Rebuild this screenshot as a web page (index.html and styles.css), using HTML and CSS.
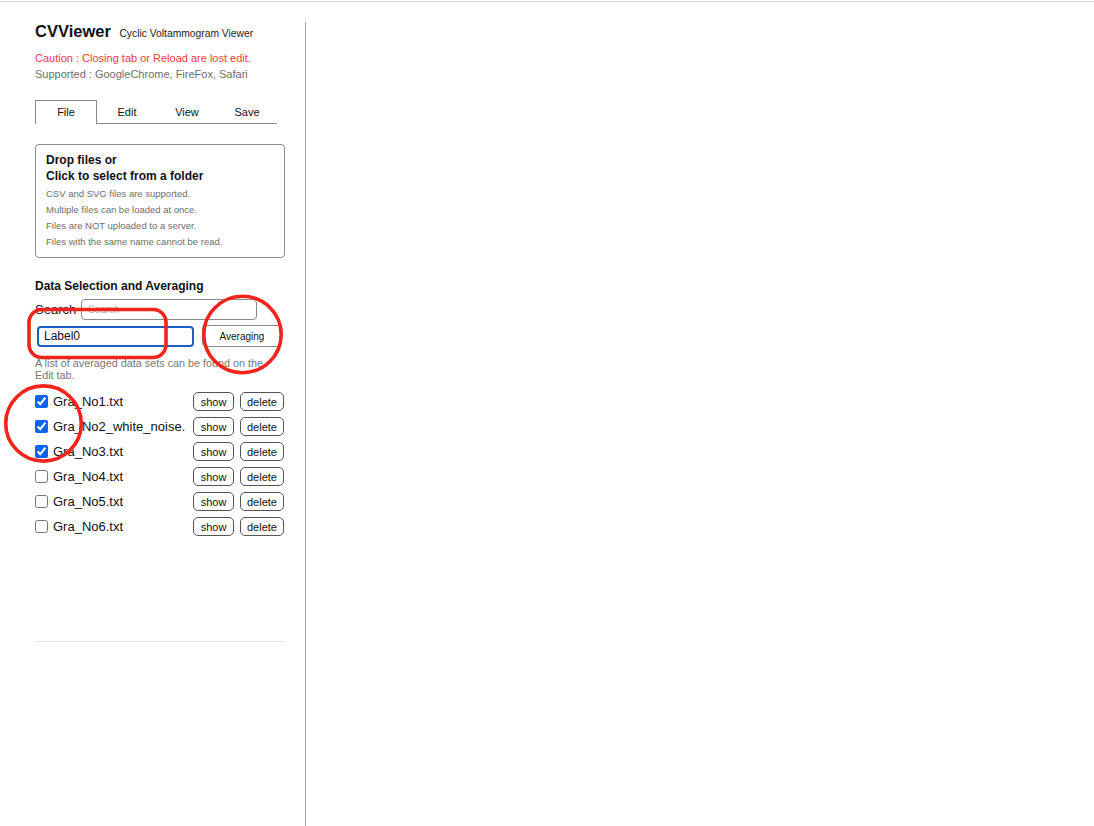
FILE: index.html
```html
<!DOCTYPE html>
<html lang="en">
<head>
<meta charset="utf-8">
<title>CVViewer</title>
<link rel="stylesheet" href="styles.css">
</head>
<body>
<div class="topline"></div>
<div class="app">
  <aside class="sidebar">
    <h1 class="title">CVViewer <span class="subtitle">Cyclic Voltammogram Viewer</span></h1>
    <p class="caution">Caution : Closing tab or Reload are lost edit.</p>
    <p class="supported">Supported : GoogleChrome, FireFox, Safari</p>

    <nav class="tabs">
      <div class="tab active">File</div>
      <div class="tab">Edit</div>
      <div class="tab">View</div>
      <div class="tab">Save</div>
      <div class="tab-rest"></div>
    </nav>

    <div class="dropbox">
      <div class="drop-title">Drop files or<br>Click to select from a folder</div>
      <div class="drop-note">CSV and SVG files are supported.</div>
      <div class="drop-note">Multiple files can be loaded at once.</div>
      <div class="drop-note">Files are NOT uploaded to a server.</div>
      <div class="drop-note">Files with the same name cannot be read.</div>
    </div>

    <h2 class="section-title">Data Selection and Averaging</h2>
    <div class="search-row">
      <label class="search-label">Search</label>
      <input class="search-input" type="text" placeholder="Search">
    </div>
    <div class="avg-row">
      <input class="label-input" type="text" value="Label0">
      <button class="avg-btn">Averaging</button>
    </div>
    <p class="avg-note">A list of averaged data sets can be found on the Edit tab.</p>

    <div class="file-list">
      <div class="file-row">
        <input type="checkbox" class="chk" checked>
        <span class="fname">Gra_No1.txt</span>
        <button class="small-btn show">show</button>
        <button class="small-btn del">delete</button>
      </div>
      <div class="file-row">
        <input type="checkbox" class="chk" checked>
        <span class="fname">Gra_No2_white_noise.</span>
        <button class="small-btn show">show</button>
        <button class="small-btn del">delete</button>
      </div>
      <div class="file-row">
        <input type="checkbox" class="chk" checked>
        <span class="fname">Gra_No3.txt</span>
        <button class="small-btn show">show</button>
        <button class="small-btn del">delete</button>
      </div>
      <div class="file-row">
        <input type="checkbox" class="chk">
        <span class="fname">Gra_No4.txt</span>
        <button class="small-btn show">show</button>
        <button class="small-btn del">delete</button>
      </div>
      <div class="file-row">
        <input type="checkbox" class="chk">
        <span class="fname">Gra_No5.txt</span>
        <button class="small-btn show">show</button>
        <button class="small-btn del">delete</button>
      </div>
      <div class="file-row">
        <input type="checkbox" class="chk">
        <span class="fname">Gra_No6.txt</span>
        <button class="small-btn show">show</button>
        <button class="small-btn del">delete</button>
      </div>
    </div>
  </aside>
  <main class="canvas"></main>
</div>

<svg class="annotations" width="1094" height="826" viewBox="0 0 1094 826" xmlns="http://www.w3.org/2000/svg">
  <rect x="29" y="309.5" width="137" height="48" rx="13" ry="13" fill="none" stroke="#f2231b" stroke-width="3.6"/>
  <ellipse cx="242.5" cy="334.5" rx="38.7" ry="38.2" fill="none" stroke="#f2231b" stroke-width="3.6"/>
  <ellipse cx="43.5" cy="423.5" rx="37.8" ry="37.6" fill="none" stroke="#f2231b" stroke-width="3.6"/>
</svg>
</body>
</html>
```

FILE: styles.css
```css
* { box-sizing: border-box; }

html, body {
  margin: 0;
  padding: 0;
  background: #ffffff;
}

body {
  font-family: "Liberation Sans", Arial, Helvetica, sans-serif;
  color: #111;
  position: relative;
  overflow: hidden;
  height: 826px;
}

.topline {
  margin-top: 1px;
  border-top: 1px solid #d9d9d9;
}

.app {
  display: flex;
  align-items: stretch;
}

.sidebar {
  margin-top: 20px;
  width: 306px;
  padding: 0 20px 0 35px;
  border-right: 1px solid #a6a6a6;
  min-height: 820px;
}

.canvas { flex: 1; }

.title {
  margin: 0;
  font-size: 16.5px;
  font-weight: bold;
  line-height: 19px;
  color: #111;
}

.subtitle {
  font-size: 10.3px;
  font-weight: normal;
  margin-left: 4px;
  color: #222;
}

.caution {
  margin: 7px 0 0;
  font-size: 11px;
  line-height: 16px;
  color: #fa3a3a;
}

.supported {
  margin: 0;
  font-size: 11px;
  line-height: 16px;
  color: #6e6e6e;
}

.tabs {
  display: flex;
  margin-top: 18px;
  height: 24px;
  width: 242px;
}

.tab {
  width: 60px;
  height: 24px;
  font-size: 11px;
  line-height: 24px;
  text-align: center;
  color: #111;
  border-bottom: 1px solid #8a8a8a;
}

.tab.active {
  width: 62px;
  border: 1px solid #8a8a8a;
  border-bottom: none;
  line-height: 23px;
}

.tab-rest {
  flex: 1;
  border-bottom: 1px solid #8a8a8a;
}

.dropbox {
  margin-top: 20px;
  width: 250px;
  height: 114px;
  border: 1px solid #8c8c8c;
  border-radius: 4px;
  padding: 7px 10px 0;
}

.drop-title {
  font-size: 12px;
  font-weight: bold;
  line-height: 16px;
  color: #111;
  margin-bottom: 2px;
}

.drop-note {
  font-size: 9.5px;
  line-height: 16px;
  color: #6e6e6e;
}

.section-title {
  margin: 20px 0 0;
  font-size: 12px;
  font-weight: bold;
  line-height: 16px;
  color: #111;
}

.search-row {
  display: flex;
  align-items: center;
  margin-top: 5px;
  height: 21px;
}

.search-label {
  font-size: 13px;
  color: #222;
  width: 46px;
}

.search-input {
  width: 176px;
  height: 21px;
  border: 1px solid #8a8a8a;
  border-radius: 4px;
  padding: 0 6px;
  font-family: inherit;
  font-size: 10px;
  color: #111;
  outline: none;
}

.search-input::placeholder { color: #b5b5b5; }

.avg-row {
  display: flex;
  align-items: center;
  margin-top: 5px;
  height: 22px;
}

.label-input {
  margin-left: 2px;
  width: 157px;
  height: 21px;
  border: 2px solid #1d5dc8;
  border-radius: 4px;
  padding: 0 5px;
  font-family: inherit;
  font-size: 12px;
  color: #111;
  outline: none;
}

.avg-btn {
  margin-left: 8px;
  width: 80px;
  height: 22px;
  background: #fff;
  border: 1px solid #8a8a8a;
  border-radius: 4px;
  font-family: inherit;
  font-size: 10px;
  color: #111;
  padding: 0;
}

.avg-note {
  margin: 10px 0 0;
  width: 240px;
  font-size: 10.8px;
  line-height: 12px;
  color: #777;
}

.file-list {
  margin-top: 8px;
  width: 250px;
  height: 253px;
  border-bottom: 1px solid #e3e3e3;
}

.file-row {
  display: flex;
  align-items: center;
  height: 25px;
}

.chk {
  margin: 0 5px 0 0;
  width: 13px;
  height: 13px;
  accent-color: #0b63f0;
}

.fname {
  width: 132px;
  white-space: nowrap;
  overflow: hidden;
  font-size: 13px;
  color: #111;
}

.small-btn {
  height: 19px;
  background: #fff;
  border: 1px solid #555;
  border-radius: 5px;
  font-family: inherit;
  font-size: 11px;
  color: #111;
  padding: 0;
}

.small-btn.show { margin-left: 8px; width: 41px; }
.small-btn.del { margin-left: 6px; width: 44px; }

.annotations {
  position: absolute;
  top: 0;
  left: 0;
  pointer-events: none;
}
```
